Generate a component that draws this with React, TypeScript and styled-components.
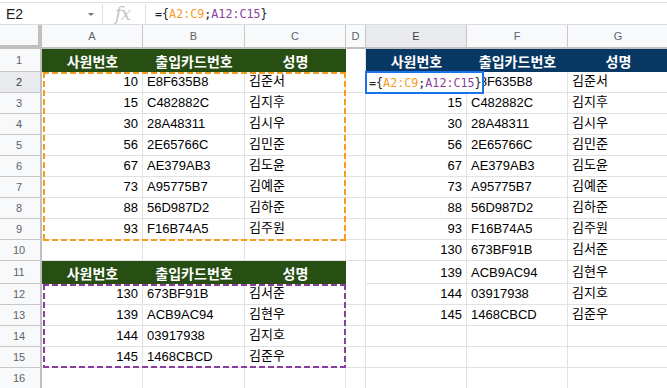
import React from "react";
import styled, { createGlobalStyle } from "styled-components";

/*--------------------------------------------------------------*/

const GlobalStyle = createGlobalStyle`
  html, body {
    margin: 0;
    padding: 0;
    background: #ffffff;
  }
  body {
    font-family: "Liberation Sans", Arial, "Noto Sans CJK KR", sans-serif;
    overflow: hidden;
  }
`;

/*--------------------------------------------------------------*/

type Row = [number, string, string];

const firstBlock: Row[] = [
  [10, "E8F635B8", "김준서"],
  [15, "C482882C", "김지후"],
  [30, "28A48311", "김시우"],
  [56, "2E65766C", "김민준"],
  [67, "AE379AB3", "김도윤"],
  [73, "A95775B7", "김예준"],
  [88, "56D987D2", "김하준"],
  [93, "F16B74A5", "김주원"],
];

const secondBlock: Row[] = [
  [130, "673BF91B", "김서준"],
  [139, "ACB9AC94", "김현우"],
  [144, "03917938", "김지호"],
  [145, "1468CBCD", "김준우"],
];

const headers = ["사원번호", "출입카드번호", "성명"];
const columns = ["A", "B", "C", "D", "E", "F", "G"];

const GREEN = "#274e13";
const BLUE = "#073763";
const ORANGE = "#f99b1c";
const PURPLE = "#8a3f9e";

/*--------------------------------------------------------------*/

// Formula with each range reference in its own colour
const Formula: React.FC = () => (
  <>
    ={"{"}
    <Ref $color={ORANGE}>A2:C9</Ref>;<Ref $color={PURPLE}>A12:C15</Ref>
    {"}"}
  </>
);

/*--------------------------------------------------------------*/

export default function App() {
  // Left side: header row, 8 rows, blank, header row, 4 rows, blank
  const left: (Row | "head" | null)[] = [
    "head",
    ...firstBlock,
    null,
    "head",
    ...secondBlock,
    null,
  ];
  // Right side: stacked result of both ranges
  const right: (Row | "head" | null)[] = [
    "head",
    ...firstBlock,
    ...secondBlock,
    null,
    null,
    null,
  ];

  return (
    <Page>
      <GlobalStyle />
      <FormulaBar>
        <NameBox>E2</NameBox>
        <Caret />
        <Divider />
        <Fx>fx</Fx>
        <Divider />
        <FormulaText>
          <Formula />
        </FormulaText>
      </FormulaBar>

      <Sheet>
        <Corner />
        {columns.map((c) => (
          <ColHeader key={c} $active={c === "E"}>
            {c}
          </ColHeader>
        ))}

        {left.map((l, i) => {
          const r = right[i];
          const n = i + 1;
          return (
            <React.Fragment key={n}>
              <RowHeader $active={n === 2}>{n}</RowHeader>
              {l === "head"
                ? headers.map((h) => (
                    <HeadCell key={h} $bg={GREEN}>
                      {h}
                    </HeadCell>
                  ))
                : l
                ? [
                    <Cell key="a" $align="right">
                      {l[0]}
                    </Cell>,
                    <Cell key="b">{l[1]}</Cell>,
                    <Cell key="c">{l[2]}</Cell>,
                  ]
                : [<Cell key="a" />, <Cell key="b" />, <Cell key="c" />]}
              <Cell $plain={l === "head"} />
              {r === "head"
                ? headers.map((h) => (
                    <HeadCell key={h} $bg={BLUE}>
                      {h}
                    </HeadCell>
                  ))
                : r
                ? [
                    <Cell key="e" $align="right">
                      {r[0]}
                    </Cell>,
                    <Cell key="f">{r[1]}</Cell>,
                    <Cell key="g">{r[2]}</Cell>,
                  ]
                : [<Cell key="e" />, <Cell key="f" />, <Cell key="g" />]}
            </React.Fragment>
          );
        })}

        {/* Copied range outlines */}
        <RangeOutline $color={ORANGE} $top={47} $height={169} />
        <RangeOutline $color={PURPLE} $top={259} $height={84} />

        {/* Active cell editor */}
        <Editor>
          <Formula />
        </Editor>
      </Sheet>
    </Page>
  );
}

/*--------------------------------------------------------------*/

const Page = styled.div`
  width: 667px;
  height: 388px;
  display: flex;
  flex-direction: column;
  overflow: hidden;
`;

const FormulaBar = styled.div`
  display: flex;
  align-items: center;
  height: 22px;
  margin-top: 2px;
  border-top: 1px solid #e0e0e0;
  border-bottom: 1px solid #dadce0;
  background: #ffffff;
`;

const NameBox = styled.div`
  width: 80px;
  padding-left: 6px;
  font-size: 14px;
  color: #202124;
`;

const Caret = styled.div`
  width: 0;
  height: 0;
  margin: 2px 8px 0 2px;
  border-left: 3px solid transparent;
  border-right: 3px solid transparent;
  border-top: 3px solid #777777;
`;

const Divider = styled.div`
  width: 1px;
  height: 20px;
  background: #e0e0e0;
`;

const Fx = styled.div`
  width: 42px;
  padding-right: 3px;
  box-sizing: border-box;
  text-align: center;
  font-family: "DejaVu Serif", "Liberation Serif", serif;
  font-style: italic;
  font-size: 18px;
  color: #c4c4c4;
  letter-spacing: -1px;
`;

const FormulaText = styled.div`
  padding-left: 9px;
  font-family: "DejaVu Sans Mono", "Liberation Mono", monospace;
  font-size: 11.7px;
  color: #202124;
`;

const Ref = styled.span<{ $color: string }>`
  color: ${({ $color }) => $color};
`;

const Sheet = styled.div`
  position: relative;
  display: grid;
  grid-template-columns: 42px 101px 102px 101px 20px 101px 101px 101px;
  grid-template-rows: 24px 23px repeat(9, 21px) 23px repeat(5, 21px);
`;

const Corner = styled.div`
  background: #f8f9fa;
  border-right: 4px solid #c0c0c0;
  border-bottom: 4px solid #c0c0c0;
`;

const ColHeader = styled.div<{ $active?: boolean }>`
  display: flex;
  align-items: center;
  justify-content: center;
  background: ${({ $active }) => ($active ? "#e8eaed" : "#f8f9fa")};
  border-right: 1px solid #c7c7c7;
  border-bottom: 2px solid #c0c0c0;
  font-size: 11px;
  color: ${({ $active }) => ($active ? "#3c4043" : "#5f6368")};
`;

const RowHeader = styled.div<{ $active?: boolean }>`
  display: flex;
  align-items: center;
  justify-content: center;
  padding-right: 2px;
  background: ${({ $active }) => ($active ? "#e8eaed" : "#f8f9fa")};
  border-right: 2px solid #c0c0c0;
  border-bottom: 1px solid #c7c7c7;
  font-size: 11px;
  color: ${({ $active }) => ($active ? "#3c4043" : "#5f6368")};
`;

const Cell = styled.div<{ $align?: "left" | "right"; $plain?: boolean }>`
  display: flex;
  align-items: flex-end;
  justify-content: ${({ $align }) =>
    $align === "right" ? "flex-end" : "flex-start"};
  padding: 0 4px 3px 4px;
  border-right: 1px solid #e2e2e2;
  border-bottom: ${({ $plain }) => ($plain ? "none" : "1px solid #e2e2e2")};
  font-size: 13px;
  color: #000000;
  white-space: nowrap;
  overflow: hidden;
`;

const HeadCell = styled.div<{ $bg: string }>`
  display: flex;
  align-items: center;
  justify-content: center;
  background: ${({ $bg }) => $bg};
  font-family: "Noto Sans CJK KR", "Liberation Sans", sans-serif;
  font-weight: 700;
  font-size: 14px;
  color: #ffffff;
  white-space: nowrap;
`;

const RangeOutline = styled.div<{
  $color: string;
  $top: number;
  $height: number;
}>`
  position: absolute;
  left: 43px;
  width: 303px;
  top: ${({ $top }) => $top}px;
  height: ${({ $height }) => $height}px;
  pointer-events: none;
  background:
    linear-gradient(90deg, ${({ $color }) => $color} 6px, transparent 6px) top left / 9px 2px repeat-x,
    linear-gradient(90deg, ${({ $color }) => $color} 6px, transparent 6px) bottom left / 9px 2px repeat-x,
    linear-gradient(180deg, ${({ $color }) => $color} 6px, transparent 6px) top left / 2px 9px repeat-y,
    linear-gradient(180deg, ${({ $color }) => $color} 6px, transparent 6px) top right / 2px 9px repeat-y;
`;

const Editor = styled.div`
  position: absolute;
  left: 365px;
  top: 46px;
  width: 119px;
  height: 23px;
  box-sizing: border-box;
  display: flex;
  align-items: center;
  padding-left: 2px;
  background: #ffffff;
  border: 2px solid #1a73e8;
  font-family: "DejaVu Sans Mono", "Liberation Mono", monospace;
  font-size: 11.7px;
  color: #202124;
  white-space: nowrap;
  overflow: hidden;
`;
